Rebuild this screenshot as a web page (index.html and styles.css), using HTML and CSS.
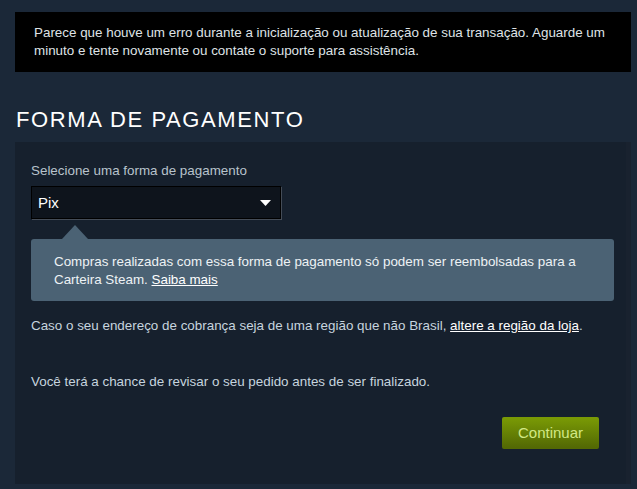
FILE: index.html
```html
<!DOCTYPE html>
<html lang="pt-BR">
<head>
  <meta charset="UTF-8">
  <meta name="viewport" content="width=device-width, initial-scale=1.0">
  <title>Forma de pagamento</title>
  <link rel="stylesheet" href="styles.css">
</head>
<body>
  <div class="page">
    <div class="error-box">
      Parece que houve um erro durante a inicialização ou atualização de sua transação. Aguarde um minuto e tente novamente ou contate o suporte para assistência.
    </div>

    <h2 class="section-title">Forma de pagamento</h2>

    <div class="panel">
      <div class="field-label">Selecione uma forma de pagamento</div>
      <div class="dropdown">
        <span>Pix</span>
        <svg class="dropdown-arrow" width="11" height="6" viewBox="0 0 11 6"><path d="M0 0 H11 L5.5 6 Z" fill="#fff"/></svg>
      </div>

      <div class="notice">
        Compras realizadas com essa forma de pagamento só podem ser reembolsadas para a Carteira Steam. <a href="#">Saiba mais</a>
      </div>

      <p class="region">Caso o seu endereço de cobrança seja de uma região que não Brasil, <a href="#">altere a região da loja</a>.</p>

      <p class="review">Você terá a chance de revisar o seu pedido antes de ser finalizado.</p>

      <div class="actions">
        <a href="#" class="btn-green">Continuar</a>
      </div>
    </div>
  </div>
</body>
</html>
```

FILE: styles.css
```css
body {
  margin: 0;
  background-color: #1b2838;
  font-family: "Liberation Sans", Arial, sans-serif;
  font-size: 13.4px;
  line-height: 18px;
  color: #c6d4df;
}
.page {
  padding: 12px 6px 0 15px;
}
.error-box {
  background-color: #000;
  color: #dfe3e6;
  padding: 12px 19px;
}

.section-title {
  margin: 0;
  padding: 33px 0 0 1px;
  height: 37px;
  font-family: "Liberation Sans", Arial, sans-serif;
  font-size: 22px;
  line-height: 30px;
  font-weight: normal;
  letter-spacing: 1.6px;
  text-transform: uppercase;
  color: #fff;
}

.panel {
  background-color: #16202d;
  padding: 20px 16px 34px 16px;
  border-right: 5px solid #19222f;
  height: 288px;
}
.field-label {
  color: #b8c3cc;
}
.dropdown {
  margin-top: 6px;
  height: 31px;
  width: 233px;
  padding: 0 9px 0 6px;
  background-color: #0e141c;
  border: 1px solid #000;
  box-shadow: 1px 1px 0 rgba(255, 255, 255, 0.2);
  display: flex;
  align-items: center;
  justify-content: space-between;
  font-size: 15px;
  color: #fff;
}
.dropdown-arrow {
  display: block;
}

.notice {
  position: relative;
  margin-top: 20px;
  width: 583px;
  box-sizing: border-box;
  background-color: #4b6274;
  border-radius: 3px;
  padding: 14px 23px 12px 23px;
  color: #eef2f5;
}
.notice::before {
  content: "";
  position: absolute;
  top: -14px;
  left: 31px;
  border-left: 13px solid transparent;
  border-right: 13px solid transparent;
  border-bottom: 14px solid #4b6274;
}
.notice a,
.region a {
  color: #fff;
  text-decoration: underline;
}

.region {
  margin: 16px 0 0 0;
}
.review {
  margin: 38px 0 0 0;
}

.actions {
  display: flex;
  justify-content: flex-end;
  margin-top: 26px;
  padding-right: 11px;
}
.btn-green {
  display: block;
  width: 97px;
  height: 32px;
  line-height: 32px;
  text-align: center;
  border-radius: 2px;
  background: linear-gradient(to bottom, #799905 5%, #536904 95%);
  color: #d2e885;
  font-size: 15px;
  text-decoration: none;
}
```
